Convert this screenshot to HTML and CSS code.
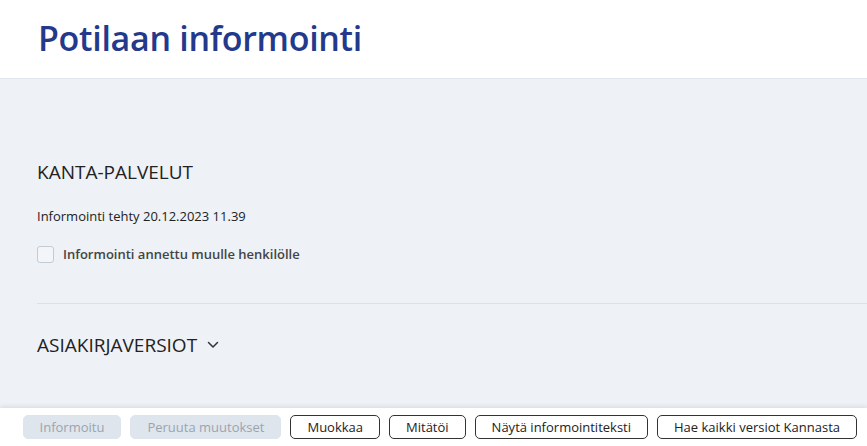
FILE: index.html
```html
<!DOCTYPE html>
<html lang="fi">

<head>
  <meta charset="UTF-8">
  <meta name="viewport" content="width=device-width, initial-scale=1.0">
  <title>Potilaan informointi</title>
  <link rel="stylesheet" href="styles.css">
</head>

<body>
  <header class="page-header">
    <h1>Potilaan informointi</h1>
  </header>

  <main class="content">
    <section class="section">
      <h2 class="section-title">KANTA-PALVELUT</h2>
      <p class="info-date">Informointi tehty 20.12.2023 11.39</p>
      <label class="check">
        <input type="checkbox">
        <span class="box"></span>
        <span>Informointi annettu muulle henkilölle</span>
      </label>
    </section>

    <section class="section section-versions">
      <h2 class="section-title">
        ASIAKIRJAVERSIOT
        <svg class="chevron" width="12" height="8" viewBox="0 0 12 8">
          <path d="M1.5 1.5 L6 6 L10.5 1.5" fill="none" stroke="#333" stroke-width="1.5" stroke-linecap="round" stroke-linejoin="round" />
        </svg>
      </h2>
    </section>
  </main>

  <footer class="actions">
    <button class="btn" disabled>Informoitu</button>
    <button class="btn" disabled>Peruuta muutokset</button>
    <button class="btn">Muokkaa</button>
    <button class="btn">Mitätöi</button>
    <button class="btn">Näytä informointiteksti</button>
    <button class="btn">Hae kaikki versiot Kannasta</button>
  </footer>
</body>

</html>
```

FILE: styles.css
```css
* {
  margin: 0;
  padding: 0;
  box-sizing: border-box;
}

body {
  font-family: 'Open Sans', 'Noto Sans', sans-serif;
  background: #eef1f6;
  color: #222;
  height: 100vh;
  display: flex;
  flex-direction: column;
  overflow: hidden;
}

.page-header {
  background: white;
  height: 79px;
  border-bottom: 1px solid #dfe5ec;
  padding: 15px 38px 0;
}

.page-header h1 {
  font-size: 34px;
  font-weight: 600;
  color: #233a8c;
  letter-spacing: -0.3px;
}

.content {
  flex: 1;
  padding: 0 0 0 37px;
}

.section {
  padding-top: 80px;
  padding-bottom: 40px;
  border-bottom: 1px solid #dde1e7;
}

.section-title {
  font-size: 19px;
  font-weight: 400;
  color: #222;
  display: flex;
  align-items: center;
  gap: 10px;
}

.info-date {
  font-size: 13px;
  margin-top: 22px;
  color: #222;
}

.check {
  display: flex;
  align-items: center;
  gap: 9px;
  margin-top: 20px;
  font-size: 13px;
  font-weight: 600;
  color: #444;
}

.check input {
  display: none;
}

.check .box {
  width: 17px;
  height: 17px;
  border: 1px solid #c3cbd5;
  border-radius: 3px;
  background: #f3f5f8;
}

.section-versions {
  border-bottom: none;
  padding-top: 28px;
}

.actions {
  background: white;
  height: 38px;
  box-shadow: 0 -2px 4px rgba(0, 0, 0, 0.08);
  display: flex;
  justify-content: flex-end;
  align-items: center;
  gap: 9px;
  padding: 0 10px 0 21px;
}

.btn {
  font-family: inherit;
  font-size: 13px;
  height: 24px;
  padding: 0 16px;
  background: white;
  color: #222;
  border: 1px solid #333;
  border-radius: 5px;
  cursor: pointer;
}

.btn:disabled {
  background: #dfe5ec;
  border-color: #dfe5ec;
  color: #9aa4b0;
  cursor: default;
}
```
